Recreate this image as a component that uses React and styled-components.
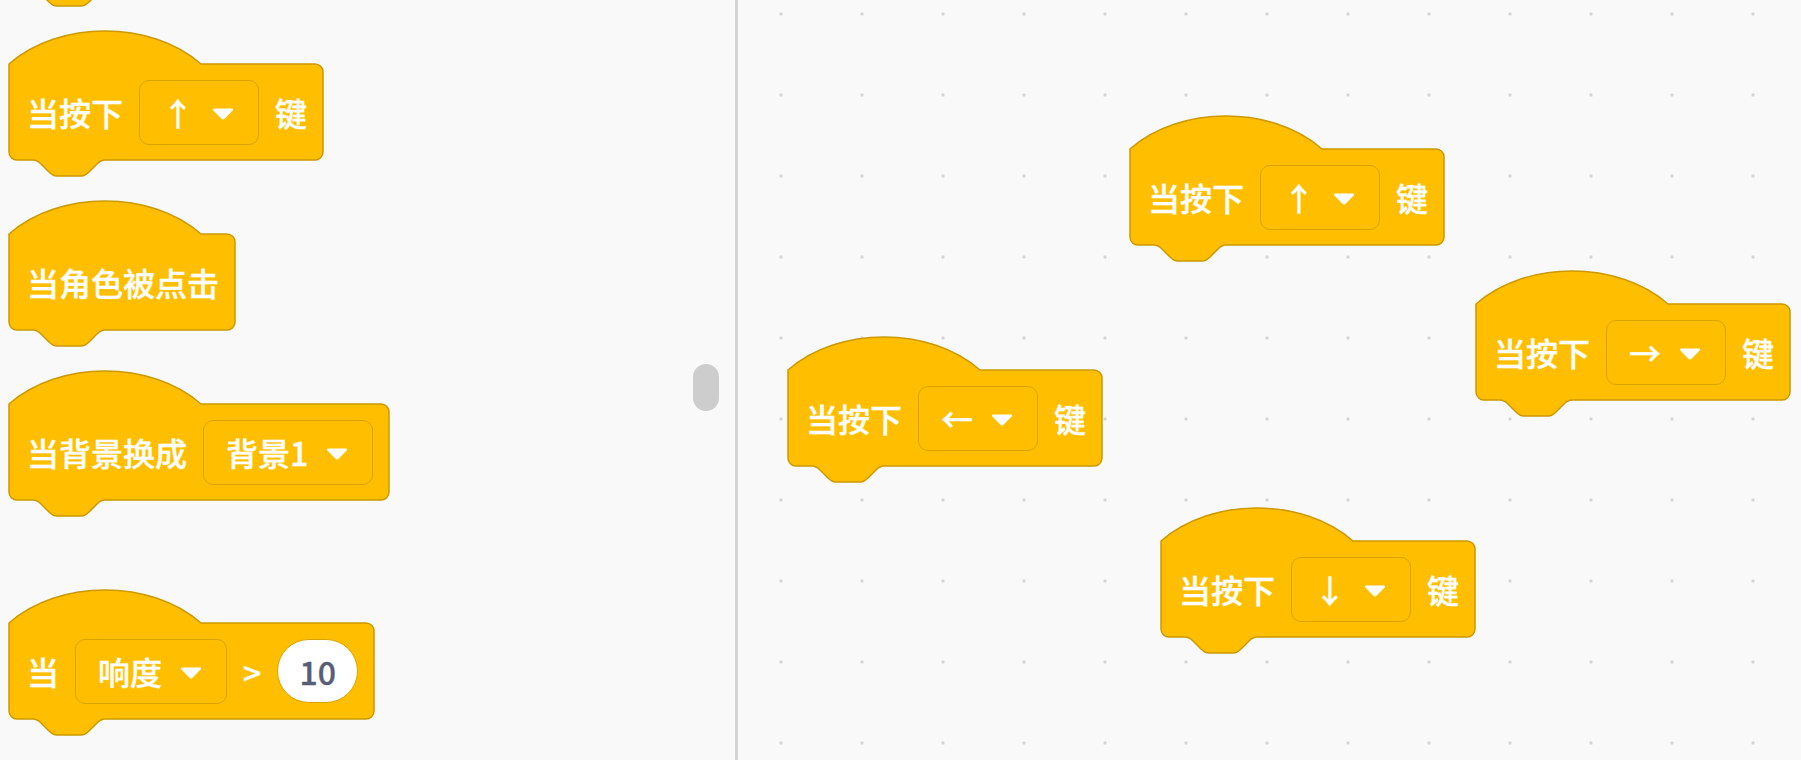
import React, { useLayoutEffect, useRef, useState } from "react";
import styled, { createGlobalStyle } from "styled-components";

const HAT = 33;
const BODY = 96;
const NOTCH = 16;

const GlobalStyle = createGlobalStyle`
  html, body {
    margin: 0;
    background: #f9f9f9;
    overflow: hidden;
  }
  body {
    font-family: "Noto Sans CJK SC", "Noto Sans", sans-serif;
  }
`;

const Page = styled.div`
  display: flex;
  width: 1801px;
  height: 760px;
  overflow: hidden;
  background: #f9f9f9;
`;

const Palette = styled.div`
  position: relative;
  flex: 0 0 738px;
  box-sizing: border-box;
  display: flex;
  flex-direction: column;
  align-items: flex-start;
  gap: 25px;
  padding-left: 8px;
  border-right: 3px solid #d4d4d4;
  overflow: hidden;
`;

const ScrollThumb = styled.div`
  position: absolute;
  left: 693px;
  top: 364px;
  width: 26px;
  height: 47px;
  border-radius: 13px;
  background: #cdcdcd;
`;

const Canvas = styled.div`
  position: relative;
  flex: 1;
  background-color: #f9f9f9;
  background-image: radial-gradient(circle, #d0d0d0 1.2px, transparent 1.8px);
  background-size: 81px 81px;
  background-position: 2.5px -26.5px;
`;

const CanvasSlot = styled.div`
  position: absolute;
  left: ${p => p.$x}px;
  top: ${p => p.$y}px;
`;

const BlockWrap = styled.div`
  position: relative;
  display: inline-flex;
  padding: ${HAT}px 0 ${NOTCH}px;
  margin-top: ${p => p.$offset || 0}px;
`;

const Shape = styled.svg`
  position: absolute;
  left: 0;
  top: 0;
  overflow: visible;
`;

const Row = styled.div`
  position: relative;
  display: flex;
  align-items: center;
  gap: 16px;
  height: ${BODY}px;
  padding: 0 17px 0 19px;
  color: #fff;
  font-size: 32px;
  font-weight: 500;
  -webkit-text-stroke: 0.35px #fff;
  line-height: 1;
  white-space: nowrap;
`;

const Label = styled.span`
  display: block;
`;

const Spacer = styled.span`
  display: block;
  width: ${p => p.$w}px;
`;

const Dropdown = styled.div`
  display: flex;
  align-items: center;
  gap: 18px;
  height: 65px;
  box-sizing: border-box;
  padding: 0 24px 0 22px;
  border: 1.5px solid #d9a400;
  border-radius: 10px;
  background: #ffbf00;
`;

const Caret = styled.svg`
  display: block;
  margin-top: 4px;
`;

const NumberField = styled.div`
  display: flex;
  align-items: center;
  justify-content: center;
  width: 81px;
  height: 64px;
  box-sizing: border-box;
  border: 1.5px solid #d9a400;
  border-radius: 32px;
  background: #fff;
  color: #575e75;
  -webkit-text-stroke: 0.35px #575e75;
`;

function hatPath(w) {
  const o = 1;
  const r = 8;
  const top = HAT;
  const bot = HAT + BODY;
  return `M ${o} ${top} c 50 -44 142 -44 192 0 H ${w - r - o} a ${r} ${r} 0 0 1 ${r} ${r} V ${bot - r} a ${r} ${r} 0 0 1 ${-r} ${r} H ${o + 96} c -4 0 -6 2 -8 4 l -8 8 c -2 2 -4 4 -8 4 h -24 c -4 0 -6 -2 -8 -4 l -8 -8 c -2 -2 -4 -4 -8 -4 H ${o + r} a ${r} ${r} 0 0 1 ${-r} ${-r} Z`;
}

function HatBlock({ children, offset }) {
  const rowRef = useRef(null);
  const [width, setWidth] = useState(300);

  useLayoutEffect(() => {
    const el = rowRef.current;
    const update = () => setWidth(el.offsetWidth);
    update();
    const ro = new ResizeObserver(update);
    ro.observe(el);
    return () => ro.disconnect();
  }, []);

  return (
    <BlockWrap $offset={offset}>
      <Shape width={width} height={HAT + BODY + NOTCH}>
        <path d={hatPath(width)} fill="#ffbf00" stroke="#cc9900" strokeWidth="1.5" />
      </Shape>
      <Row ref={rowRef}>{children}</Row>
    </BlockWrap>
  );
}

function Menu({ value }) {
  return (
    <Dropdown>
      <Label>{value}</Label>
      <Caret width="22" height="12" viewBox="0 0 22 12">
        <path d="M2.5 0.5 H19.5 Q22 0.5 20.6 2.6 L12.6 10.8 Q11 12.3 9.4 10.8 L1.4 2.6 Q0 0.5 2.5 0.5 Z" fill="#fff" />
      </Caret>
    </Dropdown>
  );
}

function KeyBlock({ arrow }) {
  return (
    <HatBlock>
      <Label>当按下</Label>
      <Menu value={arrow} />
      <Label>键</Label>
    </HatBlock>
  );
}

const canvasBlocks = [
  { x: 391, y: 116, arrow: "↑" },
  { x: 49, y: 337, arrow: "←" },
  { x: 737, y: 271, arrow: "→" },
  { x: 422, y: 508, arrow: "↓" },
];

export default function App() {
  return (
    <>
      <GlobalStyle />
      <Page>
        <Palette>
          <HatBlock offset={-139}>
            <Spacer $w={220} />
          </HatBlock>
          <KeyBlock arrow="↑" />
          <HatBlock>
            <Label>当角色被点击</Label>
          </HatBlock>
          <HatBlock>
            <Label>当背景换成</Label>
            <Menu value="背景1" />
          </HatBlock>
          <HatBlock offset={49}>
            <Label>当</Label>
            <Menu value="响度" />
            <Label>&gt;</Label>
            <NumberField>10</NumberField>
          </HatBlock>
          <ScrollThumb />
        </Palette>
        <Canvas>
          {canvasBlocks.map((b, i) => (
            <CanvasSlot key={i} $x={b.x} $y={b.y}>
              <KeyBlock arrow={b.arrow} />
            </CanvasSlot>
          ))}
        </Canvas>
      </Page>
    </>
  );
}
